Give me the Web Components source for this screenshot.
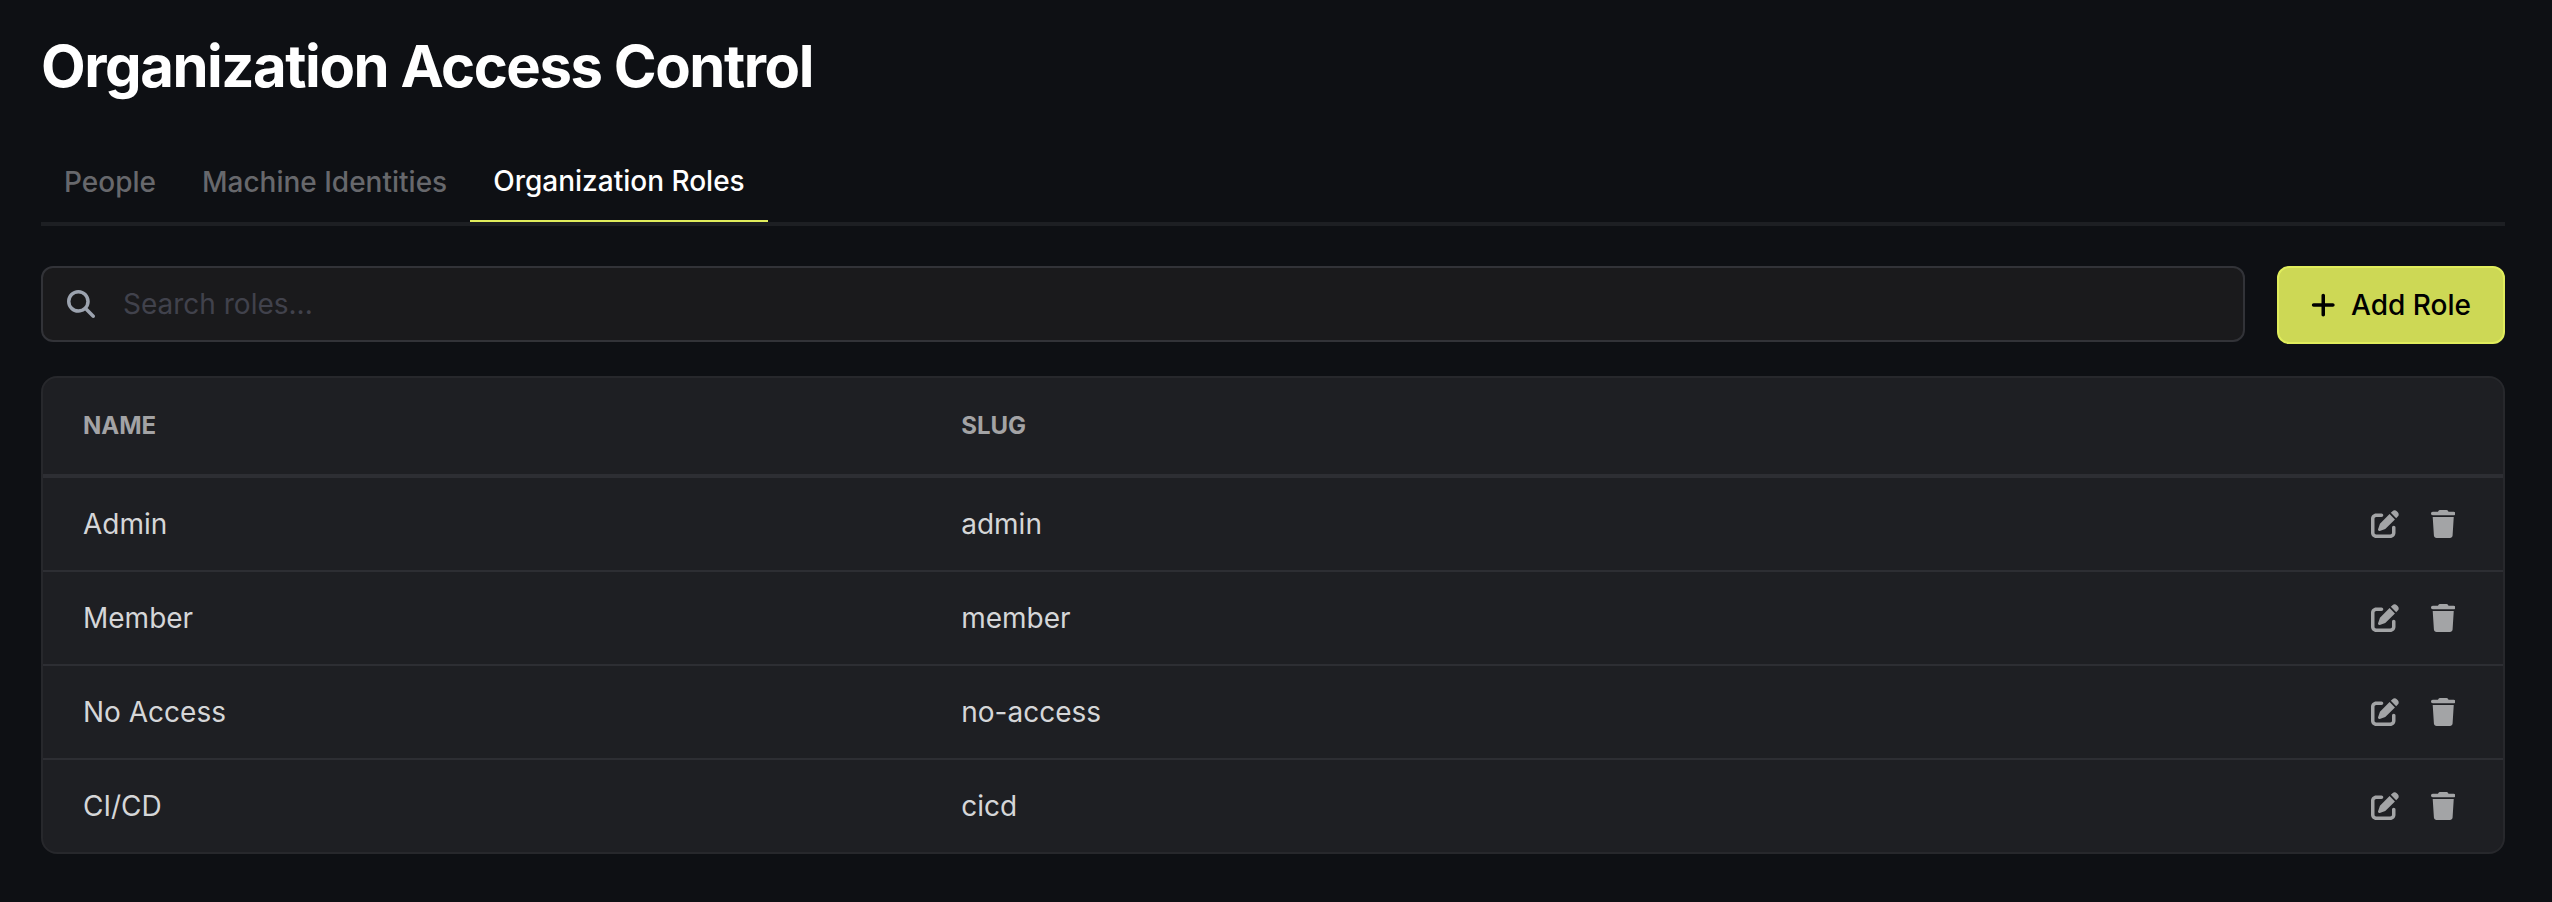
<!DOCTYPE html>
<html lang="en">
<head>
<meta charset="utf-8">
<title>Organization Access Control</title>
<style>
  body { margin: 0; background: #0e1014; font-family: Inter, "Liberation Sans", sans-serif; font-size: 28px; line-height: 40px; color: #d5d6d8; }
</style>
</head>
<body>
<access-page></access-page>
<script>
const ICONS = {
  search: ['0 0 512 512', 'M416 208c0 45.9-14.9 88.3-40 122.7L502.6 457.4c12.5 12.5 12.5 32.8 0 45.3s-32.8 12.5-45.3 0L330.7 376c-34.4 25.2-76.8 40-122.7 40C93.1 416 0 322.9 0 208S93.1 0 208 0S416 93.1 416 208zM208 352a144 144 0 1 0 0-288 144 144 0 1 0 0 288z'],
  plus: ['0 0 448 512', 'M256 80c0-17.7-14.3-32-32-32s-32 14.3-32 32V224H48c-17.7 0-32 14.3-32 32s14.3 32 32 32H192V432c0 17.7 14.3 32 32 32s32-14.3 32-32V288H400c17.7 0 32-14.3 32-32s-14.3-32-32-32H256V80z'],
  edit: ['0 0 512 512', 'M490.3 40.4C512.2 62.27 512.2 97.73 490.3 119.6L460.3 149.7L362.3 51.72L392.4 21.66C414.3-.2135 449.7-.2135 471.6 21.66L490.3 40.4zM172.4 241.7L339.7 74.34L437.7 172.3L270.3 339.6C264.2 345.8 256.7 350.4 248.4 353.2L159.6 382.8C150.1 385.6 141.5 383.4 135 376.1C128.6 370.5 126.4 361 129.2 352.4L158.8 263.6C161.6 255.3 166.2 247.8 172.4 241.7zM192 63.1C209.7 63.1 224 78.33 224 95.1C224 113.7 209.7 127.1 192 127.1H96C78.33 127.1 64 142.3 64 159.1V416C64 433.7 78.33 448 96 448H352C369.7 448 384 433.7 384 416V319.1C384 302.3 398.3 287.1 416 287.1C433.7 287.1 448 302.3 448 319.1V416C448 469 405 512 352 512H96C42.98 512 0 469 0 416V159.1C0 106.1 42.98 63.1 96 63.1H192z'],
  trash: ['0 0 448 512', 'M135.2 17.69C140.6 6.848 151.7 0 163.8 0H284.2C296.3 0 307.4 6.848 312.8 17.69L320 32H416C433.7 32 448 46.33 448 64C448 81.67 433.7 96 416 96H32C14.33 96 0 81.67 0 64C0 46.33 14.33 32 32 32H128L135.2 17.69zM31.1 128H416L394.8 466.1C393.2 492.3 372.3 512 346.9 512H101.1C75.75 512 54.77 492.3 53.19 466.1L31.1 128z']
};

customElements.define('ui-icon', class extends HTMLElement {
  constructor() { super(); this.attachShadow({ mode: 'open' }); }
  connectedCallback() {
    const [box, path] = ICONS[this.getAttribute('name')];
    this.shadowRoot.innerHTML = `<style>:host{display:block;flex:none}svg{display:block;height:28px;fill:currentColor}</style>
      <svg viewBox="${box}" aria-hidden="true"><path d="${path}"/></svg>`;
  }
});

function component(name, markup) {
  const template = document.createElement('template');
  template.innerHTML = markup;
  customElements.define(name, class extends HTMLElement {
    constructor() {
      super();
      this.attachShadow({ mode: 'open' }).append(template.content.cloneNode(true));
    }
  });
}

component('page-title', `
  <style>
    :host { display: block; }
    h1 { margin: 0; font-size: 58px; line-height: 72px; font-weight: 700; letter-spacing: -0.025em; color: #fff; }
  </style>
  <h1><slot></slot></h1>`);

customElements.define('tab-link', class extends HTMLElement {
  constructor() {
    super();
    this.attachShadow({ mode: 'open' }).innerHTML = `
      <style>
        :host { display: block; }
        a { display: flex; align-items: center; height: 80px; padding: 0 23px; box-sizing: border-box; font-weight: 500; color: #67686c; text-decoration: none; }
        :host([active]) a { color: #fff; border-bottom: 2px solid #e0ed5c; }
      </style>
      <a href="#"><slot></slot></a>`;
  }
  connectedCallback() {
    if (this.hasAttribute('active')) this.shadowRoot.querySelector('a').setAttribute('aria-current', 'page');
  }
});

component('tab-bar', `
  <style>
    :host { display: block; }
    nav { display: flex; border-bottom: 4px solid #1d1f23; }
  </style>
  <nav aria-label="Access control sections"><slot></slot></nav>`);

component('search-field', `
  <style>
    :host { display: block; flex: 1; }
    label { display: flex; align-items: center; gap: 28px; height: 76px; box-sizing: border-box; padding: 0 24px; border: 2px solid #323338; border-radius: 12px; background: #1a1a1c; }
    ui-icon { color: #9ca3af; }
    input { flex: 1; min-width: 0; height: 40px; padding: 0; border: 0; outline: 0; background: none; font: inherit; color: #d5d6d8; }
    input::placeholder { color: #41424c; opacity: 1; }
  </style>
  <label><ui-icon name="search"></ui-icon><input type="text" placeholder="Search roles..." aria-label="Search roles"></label>`);

component('primary-button', `
  <style>
    :host { display: block; }
    button { display: flex; align-items: center; gap: 16px; height: 78px; box-sizing: border-box; padding: 0 32px; border: 2px solid #e0ed5c; border-radius: 12px; background: #cdd855; font: inherit; font-weight: 500; color: #000; }
  </style>
  <button type="button"><ui-icon name="plus"></ui-icon><slot></slot></button>`);

customElements.define('icon-button', class extends HTMLElement {
  constructor() {
    super();
    this.attachShadow({ mode: 'open' }).innerHTML = `
      <style>
        :host { display: block; }
        button { display: block; padding: 0; border: 0; background: none; color: #a3a4a6; }
      </style>
      <button type="button"><slot></slot></button>`;
  }
  connectedCallback() {
    this.shadowRoot.querySelector('button').setAttribute('aria-label', this.getAttribute('label'));
  }
});

customElements.define('role-table', class extends HTMLElement {
  constructor() { super(); this.attachShadow({ mode: 'open' }); }
  connectedCallback() {
    const roles = [['Admin', 'admin'], ['Member', 'member'], ['No Access', 'no-access'], ['CI/CD', 'cicd']];
    this.shadowRoot.innerHTML = `
      <style>
        :host { display: block; border: 2px solid #27282c; border-radius: 16px; background: #1e1f23; overflow: hidden; }
        table { width: 100%; border-spacing: 0; table-layout: fixed; }
        th, td { padding: 0 40px; text-align: left; box-sizing: border-box; }
        th { height: 100px; font-size: 24px; line-height: 32px; font-weight: 700; color: #a3a3a5; border-bottom: 4px solid #2d2e33; }
        td { height: 94px; border-bottom: 2px solid #2d2e33; }
        tr:last-child td { height: 92px; border-bottom: 0; }
        .name { width: 35.7%; }
        .actions { display: flex; justify-content: flex-end; gap: 32px; padding-right: 8px; }
      </style>
      <table>
        <colgroup><col class="name"><col><col></colgroup>
        <thead><tr><th scope="col">NAME</th><th scope="col">SLUG</th><th scope="col" aria-label="Actions"></th></tr></thead>
        <tbody>${roles.map(([name, slug]) => `
          <tr><td>${name}</td><td>${slug}</td><td><div class="actions">
            <icon-button label="Edit ${name}"><ui-icon name="edit"></ui-icon></icon-button>
            <icon-button label="Delete ${name}"><ui-icon name="trash"></ui-icon></icon-button>
          </div></td></tr>`).join('')}
        </tbody>
      </table>`;
  }
});

component('access-page', `
  <style>
    :host { display: block; padding: 30px 47px 48px 41px; }
    tab-bar { margin-top: 40px; }
    .toolbar { display: flex; align-items: flex-start; gap: 32px; margin: 40px 0 32px; }
  </style>
  <main>
    <page-title>Organization Access Control</page-title>
    <tab-bar>
      <tab-link>People</tab-link>
      <tab-link>Machine Identities</tab-link>
      <tab-link active>Organization Roles</tab-link>
    </tab-bar>
    <div class="toolbar"><search-field></search-field><primary-button>Add Role</primary-button></div>
    <role-table></role-table>
  </main>`);
</script>
</body>
</html>
